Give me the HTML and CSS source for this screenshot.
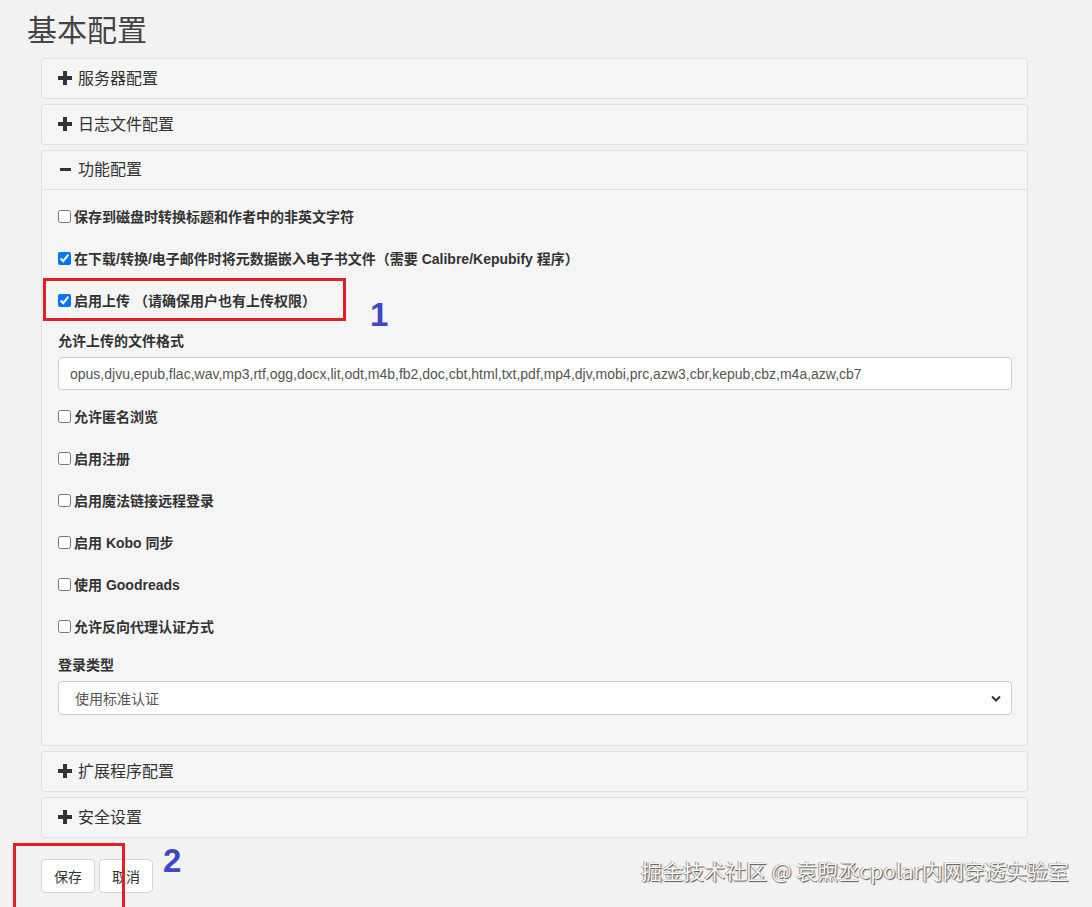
FILE: index.html
```html
<!DOCTYPE html>
<html lang="zh">
<head>
<meta charset="utf-8">
<title>基本配置</title>
<link rel="stylesheet" href="styles.css">
</head>
<body>
<div class="page">
  <h1 class="title">基本配置</h1>
  <div class="panels">
    <div class="panel">
      <div class="panel-heading"><svg class="ico" viewBox="0 0 14 14"><rect x="5" y="0" width="4" height="14"/><rect x="0" y="5" width="14" height="4"/></svg><span>服务器配置</span></div>
    </div>
    <div class="panel">
      <div class="panel-heading"><svg class="ico" viewBox="0 0 14 14"><rect x="5" y="0" width="4" height="14"/><rect x="0" y="5" width="14" height="4"/></svg><span>日志文件配置</span></div>
    </div>
    <div class="panel">
      <div class="panel-heading open"><svg class="ico" viewBox="0 0 14 14"><rect x="2" y="6" width="11" height="3"/></svg><span>功能配置</span></div>
      <div class="panel-body">
        <label class="check"><input type="checkbox"><span>保存到磁盘时转换标题和作者中的非英文字符</span></label>
        <label class="check"><input type="checkbox" checked><span>在下载/转换/电子邮件时将元数据嵌入电子书文件（需要 Calibre/Kepubify 程序）</span></label>
        <label class="check"><input type="checkbox" checked><span>启用上传 （请确保用户也有上传权限）</span></label>
        <div class="field">
          <div class="field-label">允许上传的文件格式</div>
          <input class="text-input" type="text" value="opus,djvu,epub,flac,wav,mp3,rtf,ogg,docx,lit,odt,m4b,fb2,doc,cbt,html,txt,pdf,mp4,djv,mobi,prc,azw3,cbr,kepub,cbz,m4a,azw,cb7">
        </div>
        <label class="check"><input type="checkbox"><span>允许匿名浏览</span></label>
        <label class="check"><input type="checkbox"><span>启用注册</span></label>
        <label class="check"><input type="checkbox"><span>启用魔法链接远程登录</span></label>
        <label class="check"><input type="checkbox"><span>启用 Kobo 同步</span></label>
        <label class="check"><input type="checkbox"><span>使用 Goodreads</span></label>
        <label class="check last"><input type="checkbox"><span>允许反向代理认证方式</span></label>
        <div class="field final">
          <div class="field-label">登录类型</div>
          <div class="select"><span>使用标准认证</span><svg class="chev" viewBox="0 0 10 7"><path d="M1 1.5 L5 5.5 L9 1.5" fill="none" stroke="#333" stroke-width="2"/></svg></div>
        </div>
      </div>
    </div>
    <div class="panel">
      <div class="panel-heading"><svg class="ico" viewBox="0 0 14 14"><rect x="5" y="0" width="4" height="14"/><rect x="0" y="5" width="14" height="4"/></svg><span>扩展程序配置</span></div>
    </div>
    <div class="panel">
      <div class="panel-heading"><svg class="ico" viewBox="0 0 14 14"><rect x="5" y="0" width="4" height="14"/><rect x="0" y="5" width="14" height="4"/></svg><span>安全设置</span></div>
    </div>
  </div>
  <div class="buttons">
    <button class="btn">保存</button>
    <button class="btn">取消</button>
  </div>
</div>
<div class="mark box1"></div>
<div class="num num1">1</div>
<div class="mark box2"></div>
<div class="num num2">2</div>
<div class="watermark">掘金技术社区 @ 袁煦丞cpolar内网穿透实验室</div>
</body>
</html>
```
FILE: styles.css
```css
* { box-sizing: border-box; }
html, body { margin: 0; padding: 0; }
body {
  background: #f2f2f2;
  font-family: "Liberation Sans", "Noto Sans CJK SC", sans-serif;
  color: #333;
  width: 1092px;
  height: 907px;
  overflow: hidden;
  position: relative;
}
.page { padding: 14px 0 0 27px; }
.title {
  margin: 0 0 11px 0;
  font-size: 30px;
  line-height: 33px;
  font-weight: normal;
  color: #444;
}
.panels {
  margin-left: 14px;
  width: 987px;
  display: flex;
  flex-direction: column;
  gap: 5px;
}
.panel {
  background: #f5f5f5;
  border: 1px solid #e0e0e0;
  border-radius: 3px;
}
.panel-heading {
  height: 39px;
  display: flex;
  align-items: center;
  padding-left: 16px;
  padding-bottom: 4px;
  font-size: 16px;
  color: #333;
}
.panel-heading.open { border-bottom: 1px solid #e0e0e0; height: 39px; padding-bottom: 4px; }
.ico { width: 14px; height: 14px; fill: #333; margin-right: 6px; flex: none; margin-top: 2px; }
.panel-body {
  padding: 16px 16px 30px 16px;
  display: flex;
  flex-direction: column;
}
.check {
  display: flex;
  align-items: center;
  height: 20px;
  margin-bottom: 22px;
  font-size: 14px;
  font-weight: bold;
  color: #333;
}
.check.last { margin-bottom: 20px; }
.check input {
  width: 13px;
  height: 13px;
  margin: 0 3px 0 0;
}
.field { display: flex; flex-direction: column; margin-bottom: 16px; margin-top: -1px; }
.field.final { margin-bottom: 0; }
.field-label {
  font-size: 14px;
  font-weight: bold;
  line-height: 20px;
  height: 20px;
  margin-bottom: 6px;
}
.text-input {
  width: 954px;
  height: 33px;
  border: 1px solid #ccc;
  border-radius: 4px;
  background: #fff;
  padding: 0 11px;
  font-family: "Liberation Sans", "Noto Sans CJK SC", sans-serif;
  font-size: 14px;
  color: #555;
}
.select {
  width: 954px;
  height: 34px;
  border: 1px solid #ccc;
  border-radius: 4px;
  background: #fff;
  display: flex;
  align-items: center;
  justify-content: space-between;
  padding: 0 10px 0 16px;
  font-size: 14px;
  color: #555;
}
.chev { width: 10px; height: 7px; }
.buttons { display: flex; gap: 4px; margin: 21px 0 0 14px; }
.btn {
  width: 54px;
  height: 34px;
  background: #fff;
  border: 1px solid #d6d6d6;
  border-radius: 4px;
  font-family: "Liberation Sans", "Noto Sans CJK SC", sans-serif;
  font-size: 14px;
  color: #333;
  padding: 0;
}
.mark { position: absolute; border: 3px solid #e31e24; }
.box1 { left: 43px; top: 278px; width: 303px; height: 43px; }
.box2 { left: 13px; top: 843px; width: 112px; height: 70px; }
.num {
  position: absolute;
  font-family: "Liberation Sans", sans-serif;
  font-weight: bold;
  font-size: 33px;
  color: #3d47c4;
  line-height: 1;
}
.num1 { left: 370px; top: 298px; }
.num2 { left: 163px; top: 844px; }
.watermark {
  position: absolute;
  left: 641px;
  top: 855px;
  font-family: "Noto Sans CJK SC", sans-serif;
  font-size: 21px;
  line-height: 30px;
  color: #f4f4f4;
  text-shadow: 1px 1px 1px #555, -1px 0 0 #999;
  white-space: nowrap;
}
```
